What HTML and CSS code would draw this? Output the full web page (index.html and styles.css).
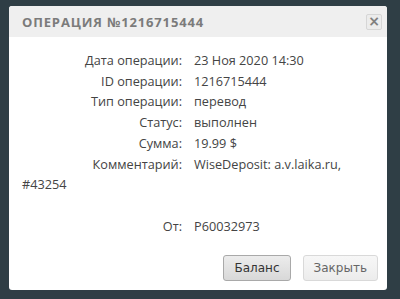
FILE: index.html
```html
<!DOCTYPE html>
<html lang="ru">
<head>
    <meta charset="UTF-8">
    <title>Операция</title>
    <link rel="stylesheet" href="styles.css">
</head>
<body>
    <div class="dialog">
        <div class="dialog-head">
            <span class="dialog-title">Операция №1216715444</span>
            <button class="close-btn">&times;</button>
        </div>
        <div class="dialog-body">
            <div class="row"><span class="label">Дата операции:</span>23 Ноя 2020 14:30</div>
            <div class="row"><span class="label">ID операции:</span>1216715444</div>
            <div class="row"><span class="label">Тип операции:</span>перевод</div>
            <div class="row"><span class="label">Статус:</span>выполнен</div>
            <div class="row"><span class="label">Сумма:</span>19.99 $</div>
            <div class="row"><span class="label">Комментарий:</span>WiseDeposit: a.v.laika.ru, #43254</div>
            <div class="row row-gap"><span class="label">От:</span>P60032973</div>
        </div>
        <div class="dialog-foot">
            <button class="btn btn-main">Баланс</button>
            <button class="btn">Закрыть</button>
        </div>
    </div>
</body>
</html>
```

FILE: styles.css
```css
body {
    margin: 0;
    padding: 6px 13px 11px 9px;
    background-color: #2f3e45;
    font-family: "Open Sans", sans-serif;
}
.dialog {
    background-color: #fff;
    border-radius: 3px;
    overflow: hidden;
}
.dialog-head {
    display: flex;
    align-items: center;
    justify-content: space-between;
    height: 31px;
    padding: 0 5px 0 13px;
    background-color: #efefef;
}
.dialog-title {
    font-family: "Open Sans", sans-serif;
    font-weight: bold;
    font-size: 13px;
    letter-spacing: 0.85px;
    text-transform: uppercase;
    color: #7b7b7b;
}
.close-btn {
    width: 16px;
    height: 16px;
    padding: 0;
    border: 1px solid #d6d6d6;
    border-radius: 2px;
    background-color: #ececec;
    color: #808080;
    font-family: "DejaVu Sans", sans-serif;
    font-weight: bold;
    font-size: 14px;
    line-height: 13px;
}
.dialog-body {
    padding: 13px 13px 0;
    font-size: 12.7px;
    color: #444;
}
.row {
    line-height: 20.7px;
}
.row-gap {
    margin-top: 21.5px;
}
.label {
    display: inline-block;
    width: 160px;
    margin-right: 12px;
    text-align: right;
}
.dialog-foot {
    display: flex;
    justify-content: flex-end;
    gap: 12px;
    padding: 18px 9px 9px;
}
.btn {
    height: 26px;
    padding: 0 10px;
    border: 1px solid #d9d9d9;
    border-radius: 3px;
    background: linear-gradient(#f7f7f7, #ececec);
    color: #666;
    font-family: "DejaVu Sans", sans-serif;
    font-size: 12px;
}
.btn-main {
    border-color: #a9a9a9;
    background: linear-gradient(#ececec, #d8d8d8);
    color: #333;
}
```
